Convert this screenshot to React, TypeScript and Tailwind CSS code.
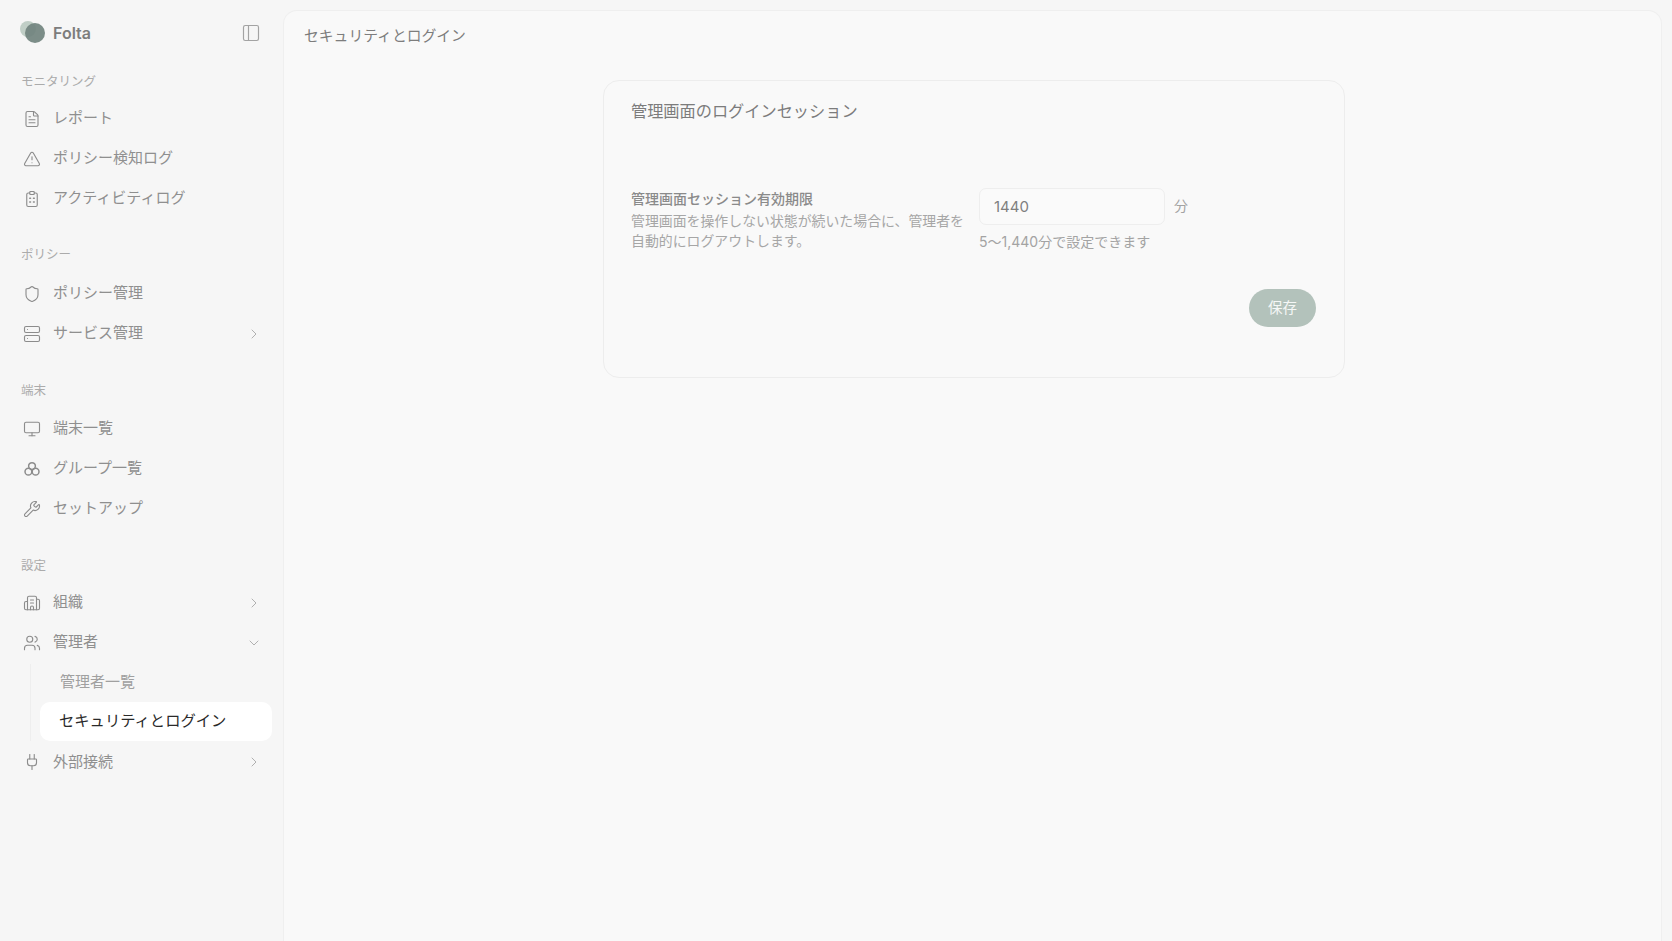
import {
  Building2,
  ChevronDown,
  ChevronRight,
  FileText,
  Monitor,
  PanelLeft,
  Plug,
  Server,
  Shield,
  TriangleAlert,
  Users,
  Wrench,
} from 'lucide-react'
import type { ReactNode } from 'react'

const GroupIcon = () => (
  <svg viewBox="0 0 24 24" className="size-[18px]" fill="none" stroke="currentColor" strokeWidth={2}>
    <circle cx="12" cy="8" r="4.5" />
    <circle cx="7.2" cy="15.5" r="4.5" />
    <circle cx="16.8" cy="15.5" r="4.5" />
  </svg>
)

const ClipboardDots = () => (
  <svg viewBox="0 0 24 24" className="size-[18px]" fill="none" stroke="currentColor" strokeWidth={1.5} strokeLinecap="round">
    <rect x="9" y="2" width="6" height="4" rx="1" />
    <path d="M15 4h2a2 2 0 0 1 2 2v14a2 2 0 0 1-2 2H7a2 2 0 0 1-2-2V6a2 2 0 0 1 2-2h2" />
    <path d="M9 11h1M14 11h1M9 16h1M14 16h1" strokeWidth={2} />
  </svg>
)

const Logo = () => (
  <div className="relative size-[24px] shrink-0">
    <div className="absolute left-0 top-0 size-[16px] rounded-full bg-[#c0cec6]" />
    <div className="absolute left-[5px] top-[2px] size-[20px] rounded-full bg-[#6f827c]/90" />
  </div>
)

const NavItem = ({
  icon,
  label,
  chevron,
}: {
  icon: ReactNode
  label: string
  chevron?: 'right' | 'down'
}) => (
  <div className="flex h-10 items-center text-[15px] text-[#8f8f8f]">
    <span className="flex w-[32px] shrink-0 items-center pl-[2px] text-[#8c8c8c]">{icon}</span>
    <span className="flex-1">{label}</span>
    {chevron === 'right' && <ChevronRight className="mr-[10px] size-4 text-[#b0b0b0]" strokeWidth={1.5} />}
    {chevron === 'down' && <ChevronDown className="mr-[10px] size-4 text-[#b0b0b0]" strokeWidth={1.5} />}
  </div>
)

const SectionLabel = ({ children, gap }: { children: string; gap: string }) => (
  <div className={`flex h-5 items-center text-[12.5px] text-[#ababab] ${gap}`}>{children}</div>
)

const iconClass = 'size-[18px]'

const Sidebar = () => (
  <aside className="w-[283px] shrink-0 pl-[21px] pr-[11px]">
    <div className="mb-[26px] flex h-[46px] items-center pr-[11px] pt-[20px]">
      <div className="-ml-[1px] mr-[9px] flex items-center">
        <Logo />
      </div>
      <span className="flex-1 text-base font-semibold text-[#7d7d7d]">Folta</span>
      <PanelLeft className="size-5 text-[#a3a3a3]" strokeWidth={1.4} />
    </div>

    <SectionLabel gap="mb-[6.5px]">モニタリング</SectionLabel>
    <div className="mb-[27px]">
      <NavItem icon={<FileText className={iconClass} strokeWidth={1.5} />} label="レポート" />
      <NavItem icon={<TriangleAlert className={iconClass} strokeWidth={1.5} />} label="ポリシー検知ログ" />
      <NavItem icon={<ClipboardDots />} label="アクティビティログ" />
    </div>

    <SectionLabel gap="mb-2">ポリシー</SectionLabel>
    <div className="mb-7">
      <NavItem icon={<Shield className={iconClass} strokeWidth={1.5} />} label="ポリシー管理" />
      <NavItem icon={<Server className={iconClass} strokeWidth={1.5} />} label="サービス管理" chevron="right" />
    </div>

    <SectionLabel gap="mb-[7px]">端末</SectionLabel>
    <div className="mb-7">
      <NavItem icon={<Monitor className={iconClass} strokeWidth={1.5} />} label="端末一覧" />
      <NavItem icon={<GroupIcon />} label="グループ一覧" />
      <NavItem icon={<Wrench className={iconClass} strokeWidth={1.5} />} label="セットアップ" />
    </div>

    <SectionLabel gap="mb-1.5">設定</SectionLabel>
    <NavItem icon={<Building2 className={iconClass} strokeWidth={1.5} />} label="組織" chevron="right" />
    <NavItem icon={<Users className={iconClass} strokeWidth={1.5} />} label="管理者" chevron="down" />
    <div className="mb-[1.5px] ml-[9px] mt-[1px] flex flex-col border-l border-[#eeeeee] pl-[9px] text-[15px]">
      <div className="flex h-[38px] items-center pl-[20px] text-[#a0a0a0]">管理者一覧</div>
      <div className="flex h-[39px] items-center rounded-[10px] bg-white pl-[19px] text-[15.3px] text-[#2a2a2a]">
        セキュリティとログイン
      </div>
    </div>
    <NavItem icon={<Plug className={iconClass} strokeWidth={1.5} />} label="外部接続" chevron="right" />
  </aside>
)

export default function App() {
  return (
    <div
      className="flex h-[941px] w-[1672px] overflow-hidden bg-[#f6f6f6]"
      style={{ fontFamily: 'Inter, "Noto Sans CJK JP", sans-serif' }}
    >
      <Sidebar />
      <main className="mr-[10px] mt-[10px] flex-1 rounded-t-[14px] border border-b-0 border-[#efefef] bg-[#f9f9f9]">
        <div className="flex h-[48px] items-center pl-5 pt-[2px] text-[14.8px] text-[#7d7d7d]">
          セキュリティとログイン
        </div>
        <div className="pl-[3px]">
          <div className="mx-auto mt-[21px] h-[298px] w-[742px] rounded-[16px] border border-[#ededed] pl-[27px] pr-[28px] pt-[18px]">
            <h2 className="text-[16.2px] leading-[24px] text-[#7c7c7c]">管理画面のログインセッション</h2>
            <div className="mt-[65px] flex">
              <div className="w-[348px] shrink-0 pt-[1px]">
                <div className="text-sm font-medium leading-5 text-[#8a8a8a]">管理画面セッション有効期限</div>
                <p className="mt-[2px] text-[13.9px] leading-[20px] text-[#a6a6a6]">
                  管理画面を操作しない状態が続いた場合に、管理者を
                  <br />
                  自動的にログアウトします。
                </p>
              </div>
              <div>
                <div className="flex items-center">
                  <input
                    defaultValue="1440"
                    className="h-[37px] w-[186px] rounded-[7px] border border-[#eeeeee] bg-[#fafafa] px-[14px] text-[15px] text-[#7f7f7f] outline-none"
                  />
                  <span className="ml-[9px] -translate-y-[1px] text-sm text-[#a3a3a3]">分</span>
                </div>
                <div className="mt-[7px] text-sm leading-5 text-[#a3a3a3]">5〜1,440分で設定できます</div>
              </div>
            </div>
            <div className="mt-[37px] flex justify-end">
              <button className="h-[38px] w-[67px] rounded-full bg-[#b3c2bb] pb-[1px] text-[14.5px] text-[#f5f7f6]">保存</button>
            </div>
          </div>
        </div>
      </main>
    </div>
  )
}
